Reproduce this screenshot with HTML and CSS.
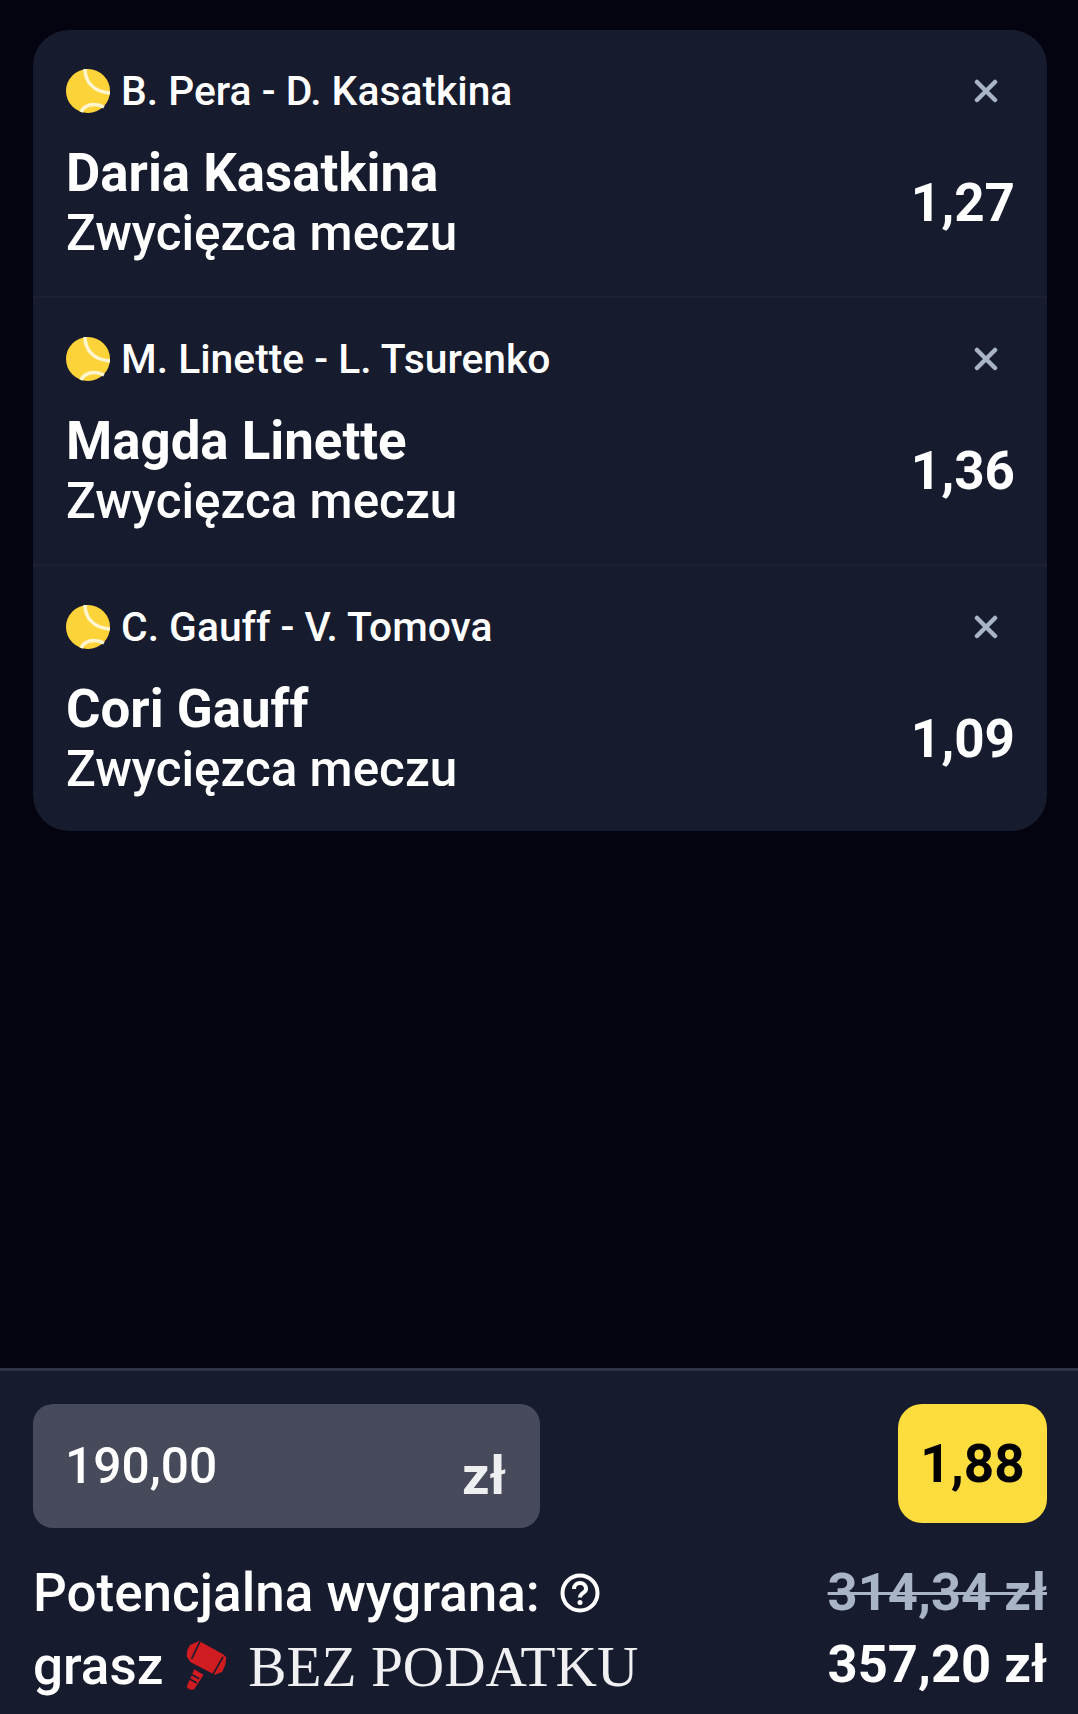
FILE: index.html
```html
<!DOCTYPE html>
<html lang="pl">
   <head>
	  <meta name="viewport" content="initial-scale=1, width=device-width">
	  <title>Kupon</title>
	  <link rel="stylesheet" href="styles.css">
   </head>
   <body>
		<svg class="defs" width="0" height="0">
			<symbol id="ball" viewBox="0 0 44 44">
				<circle cx="22" cy="22" r="22" fill="#fdd33a"/>
				<path d="M19 0c0 12 8 23 25 24" fill="none" stroke="#fff6cf" stroke-width="3.5"/>
				<path d="M15 43c3-7 13-10 23-5" fill="none" stroke="#fff6cf" stroke-width="3.5"/>
			</symbol>
			<symbol id="close" viewBox="0 0 24 24">
				<path d="M3 3l18 18M21 3L3 21" fill="none" stroke="#a9b4c6" stroke-width="4.5" stroke-linecap="round"/>
			</symbol>
		</svg>

		<div class="main">
			<ul class="card">
				<li class="row">
					<div class="head">
						<svg class="ball"><use href="#ball"/></svg>
						<span class="match">B. Pera - D. Kasatkina</span>
						<svg class="close"><use href="#close"/></svg>
					</div>
					<div class="bet">
						<div>
							<div class="pick">Daria Kasatkina</div>
							<div class="market">Zwycięzca meczu</div>
						</div>
						<div class="odds">1,27</div>
					</div>
				</li>
				<li class="row">
					<div class="head">
						<svg class="ball"><use href="#ball"/></svg>
						<span class="match">M. Linette - L. Tsurenko</span>
						<svg class="close"><use href="#close"/></svg>
					</div>
					<div class="bet">
						<div>
							<div class="pick">Magda Linette</div>
							<div class="market">Zwycięzca meczu</div>
						</div>
						<div class="odds">1,36</div>
					</div>
				</li>
				<li class="row">
					<div class="head">
						<svg class="ball"><use href="#ball"/></svg>
						<span class="match">C. Gauff - V. Tomova</span>
						<svg class="close"><use href="#close"/></svg>
					</div>
					<div class="bet">
						<div>
							<div class="pick">Cori Gauff</div>
							<div class="market">Zwycięzca meczu</div>
						</div>
						<div class="odds">1,09</div>
					</div>
				</li>
			</ul>
		</div>

		<div class="slip">
			<div class="stakeRow">
				<div class="stake">
					<span class="amount">190,00</span>
					<span class="currency">zł</span>
				</div>
				<div class="total">1,88</div>
			</div>
			<div class="winRow">
				<div class="winLabel">
					Potencjalna wygrana:
					<svg class="help" viewBox="0 0 40 40">
						<circle cx="20" cy="20" r="17.5" fill="none" stroke="#fff" stroke-width="4"/>
						<path d="M14 16c0-4 3-6 6-6s6 2 6 6c0 4-6 4-6 8.5" fill="none" stroke="#fff" stroke-width="4"/>
						<circle cx="20" cy="29.5" r="2.5" fill="#fff"/>
					</svg>
				</div>
				<div class="oldWin">314,34 zł</div>
			</div>
			<div class="winRow second">
				<div class="taxLabel">
					grasz
					<svg class="hammer" viewBox="75 55 130 160">
						<path d="M90 70L118 58l72 40 10 10-3 22-10 22-22 8-10-5-63-33-12-17 2-20z" fill="#d01c20"/>
						<path d="M120 60L95 112M190 106l-30 52" fill="none" stroke="#161b2e" stroke-width="5"/>
						<path d="M103 143l28 17-27 42c-6 5-18 4-24-6z" fill="#d01c20"/>
						<path d="M94 159l24 13M88 172l23 13" fill="none" stroke="#161b2e" stroke-width="5"/>
					</svg>
					<span class="noTax">BEZ PODATKU</span>
				</div>
				<div class="newWin">357,20 zł</div>
			</div>
		</div>
   </body>
</html>
```

FILE: styles.css
```css
* {
	box-sizing: border-box;
}
html, body {
	margin: 0;
	padding: 0;
	height: 100%;
}
body {
	background: #03040f;
	color: #fff;
	font-family: Roboto, "Liberation Sans", sans-serif;
	display: flex;
	flex-direction: column;
	overflow: hidden;
}
.defs {
	position: absolute;
}
.main {
	flex: 1;
	padding: 30px 31px 0 33px;
}
ul {
	list-style-type: none;
	padding: 0;
	margin: 0;
}
.card {
	background: #161b2e;
	border-radius: 36px;
}
.row {
	height: 268px;
	padding: 39px 32px 0 33px;
	border-bottom: 2px solid #1d2030;
}
.row:last-child {
	height: 265px;
	border-bottom: 0;
}
.head {
	display: flex;
	align-items: center;
	height: 44px;
}
.ball {
	width: 44px;
	height: 44px;
	flex: none;
}
.match {
	font-size: 40.8px;
	font-weight: 500;
	margin-left: 11px;
	flex: 1;
}
.close {
	width: 24px;
	height: 24px;
	margin-right: 17px;
}
.bet {
	display: flex;
	justify-content: space-between;
	align-items: center;
	margin-top: 30px;
}
.pick {
	font-size: 52.8px;
	font-weight: 700;
	line-height: 60px;
}
.market {
	font-size: 49.4px;
	font-weight: 500;
	line-height: 60px;
}
.odds {
	font-size: 53px;
	font-weight: 700;
}

.slip {
	height: 346px;
	background: #161b2e;
	border-top: 3px solid #2f3447;
	padding: 33px 31px 0 33px;
}
.stakeRow {
	display: flex;
	justify-content: space-between;
	align-items: flex-start;
}
.stake {
	width: 507px;
	height: 124px;
	padding: 0 34px 0 32px;
	background: #474a5a;
	border-radius: 20px;
	display: flex;
	justify-content: space-between;
	align-items: center;
}
.amount {
	font-size: 49.7px;
	font-weight: 500;
}
.currency {
	font-size: 54px;
	font-weight: 700;
	color: #eeeff1;
	margin-top: 18px;
}
.total {
	width: 149px;
	height: 119px;
	background: #fddc3e;
	color: #000;
	border-radius: 24px;
	font-size: 53px;
	font-weight: 700;
	display: flex;
	justify-content: center;
	align-items: center;
}
.winRow {
	display: flex;
	justify-content: space-between;
	align-items: center;
	margin-top: 35px;
	height: 60px;
}
.winRow.second {
	margin-top: 13px;
}
.winLabel, .taxLabel {
	font-size: 53px;
	font-weight: 500;
	display: flex;
	align-items: center;
}
.help {
	width: 40px;
	height: 40px;
	margin-left: 20px;
}
.hammer {
	width: 43px;
	height: 53px;
	margin-left: 22px;
}
.noTax {
	font-family: "Liberation Serif", serif;
	font-size: 57.3px;
	font-weight: 400;
	margin-left: 20px;
	color: #f0f0f2;
}
.oldWin {
	font-size: 52.5px;
	font-weight: 700;
	color: #a9b4c6;
	text-decoration: line-through;
	text-decoration-thickness: 3px;
	margin-bottom: 2px;
}
.newWin {
	font-size: 52.5px;
	font-weight: 700;
	margin-bottom: 5px;
}
```
